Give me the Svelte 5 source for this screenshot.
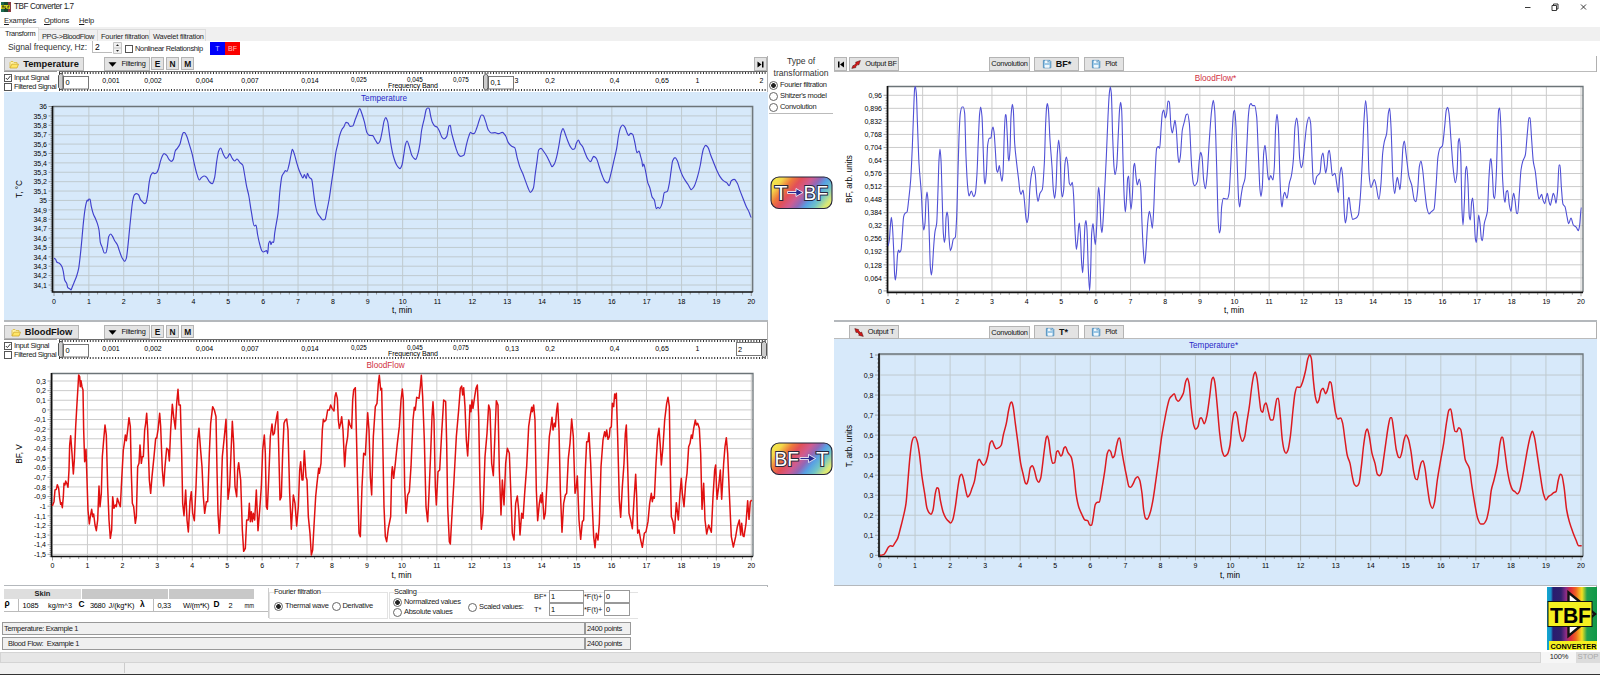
<script lang="ts">
    type Chart = {
        title: string
        titleX: number
        titleY: number
        titleColor: string
        tinted: boolean
        view: [number, number, number, number]
        plot: [number, number, number, number]
        x0: number
        x20: number
        yLabels: string[]
        yFirst: number
        yStep: number
        xLabelY: number
        unitX: number
        unitY: number
        yTitle: string
        yTitleX: number
        yTitleY: number
        stroke: string
        strokeWidth: number
        smooth: boolean
        // every trace: x offset, y offset (in thirds of a pixel) and its points
        traces: [number, number, string][]
    }

    const decimals = (from: number, count: number, step: number, digits: number) =>
        Array.from({ length: count }, (_, i) =>
            String(Number((from - i * step).toFixed(digits))).replace('.', ',')
        )

    const temperature: Chart = {
        title: 'Temperature', titleX: 384, titleY: 100.8, titleColor: '#2a2ac8', tinted: true,
        view: [4, 92, 764, 228], plot: [52.5, 106.5, 752.7, 292], x0: 54, x20: 751.3,
        yLabels: decimals(36, 20, 0.1, 1), yFirst: 106.5, yStep: 9.395,
        xLabelY: 303.5, unitX: 402, unitY: 313.2, yTitle: 'T, °C', yTitleX: 21.5, yTitleY: 189,
        stroke: '#4040cc', strokeWidth: 1.15, smooth: true,
        traces: [
            [0, 270, '162,505 167,508 170,516 178,520 186,530 190,545 194,570 200,580 203,592 210,597 213,600 217,590 222,578 230,558 236,535 241,495 245,455 250,400 255,358 259,338 262,330 264,333 267,327 270,328 274,350 280,372 286,385 292,400 297,420 301,457 307,473 313,489 318,488 322,470 326,440 332,432 338,440 344,452 352,464 358,482 366,503 374,514 379,505 383,475 388,425 393,375 398,333 403,315 410,311 416,315 421,328 427,335 434,341 438,338 443,315 448,275 453,255 459,248 463,251 470,248 476,235 481,215 486,200 492,191 500,196 507,208 514,214 520,208 526,182 532,175 540,162 546,138 550,128 554,128 560,138 567,160 576,190 583,222 590,250 598,270 604,263 613,258 620,262 628,275 637,281 644,262 650,215 656,183 662,174 670,193 678,205 684,200 689,191 696,204 704,213 711,207 720,218 728,225 734,255 740,290 746,315 754,365 763,408 768,405 773,435 779,462 786,483 790,486 800,482 803,491 806,460 810,453 813,464 816,456 821,457 824,430 829,400 834,370 840,300 846,258 852,248 856,242 861,244 867,225 873,195 877,178 883,192 890,218 897,240 905,258 909,264 913,254 919,266 922,250 928,262 935,268 941,310 946,345 952,368 960,380 969,390 975,388 980,365 987,330 995,275 1001,235 1008,185 1014,160 1018,140 1026,118 1032,110 1038,97 1044,99 1050,109 1058,108 1066,88 1073,70 1079,56 1086,72 1093,95 1101,128 1108,136 1118,137 1126,150 1134,161 1140,153 1147,122 1152,94 1157,83 1163,95 1168,130 1174,170 1180,198 1190,225 1200,236'],
            [1170, 270, '36,225 42,190 46,165 51,153 58,170 65,195 72,205 77,208 84,190 90,160 95,120 103,85 109,58 113,54 117,55 122,78 127,97 134,108 142,112 149,125 156,142 162,147 170,140 174,122 177,107 181,106 184,125 192,155 198,175 205,193 212,199 222,195 228,170 235,143 242,127 247,131 253,130 260,115 268,90 274,75 279,76 287,95 295,120 304,129 315,128 326,131 337,127 347,138 355,158 365,169 374,173 382,205 390,232 398,250 406,272 414,293 421,307 430,295 436,250 441,215 446,180 453,175 460,183 470,198 480,218 486,230 493,222 500,200 507,165 513,130 519,116 525,130 533,152 541,170 548,178 554,176 559,160 565,150 570,160 578,170 585,188 593,206 602,215 606,208 611,199 619,205 627,228 636,255 644,273 652,279 656,275 663,250 671,215 680,175 686,135 692,112 698,105 705,112 711,128 716,136 722,130 728,133 735,160 741,188 747,183 752,200 756,215 758,230 761,222 767,245 773,277 780,295 786,320 793,330 799,356 804,352 809,355 817,338 823,308 832,304 838,280 843,245 848,212 855,203 862,212 869,235 878,258 886,272 895,285 904,299 912,290 922,262 931,225 936,195 941,175 947,166 954,172 962,195 970,215 980,240 990,260 1000,272 1010,278 1018,287 1024,272 1033,268 1042,280 1050,302 1060,328 1068,348 1078,368 1084,383']
        ]
    }

    const outputFlow: Chart = {
        title: 'BloodFlow*', titleX: 1215.5, titleY: 80.8, titleColor: '#d03040', tinted: false,
        view: [834, 72, 763, 248], plot: [887.5, 86.5, 1583, 292.3], x0: 888, x20: 1581,
        yLabels: decimals(0.96, 16, 0.064, 3), yFirst: 95.3, yStep: 13.04,
        xLabelY: 303.5, unitX: 1234, unitY: 313.2, yTitle: 'BF, arb. units', yTitleX: 851.5, yTitleY: 179,
        stroke: '#5050d6', strokeWidth: 1.1, smooth: true,
        traces: [
            [2490, 150, '174,588 178,570 181,530 184,502 187,525 191,600 194,675 196,690 199,670 203,610 206,600 209,607 213,600 217,550 221,500 225,490 231,486 236,450 242,390 247,290 251,180 254,115 256,110 259,130 262,210 267,340 274,430 278,510 281,540 285,520 288,450 291,426 294,450 298,560 301,650 304,675 307,655 311,590 315,545 320,520 324,420 327,330 330,297 333,330 337,460 340,550 343,577 346,560 348,505 351,486 354,500 357,560 361,602 365,592 370,567 376,562 380,500 383,400 387,260 391,190 396,171 400,171 404,190 408,320 413,410 417,438 424,423 431,440 436,430 441,370 445,270 449,190 452,171 456,200 460,310 463,390 465,402 469,370 473,285 478,265 483,264 486,240 489,231 492,245 496,300 500,360 503,367 508,347 512,375 516,394 519,370 523,250 526,194 528,195 532,260 535,325 537,333 540,300 543,200 547,163 550,180 554,280 560,340 566,390 570,425 573,433 579,420 583,450 588,505 591,518 595,500 600,410 605,370 611,349 616,375 620,430 624,454 630,430 637,418 643,340 647,220 650,170 652,161 655,175 660,270 666,350 670,420 674,445 678,410 682,310 686,270 690,310 694,420 697,441 701,420 705,340 709,321 713,340 718,400 722,406 727,397 731,440 735,540 739,598 743,570 746,530 748,519 751,550 755,640 758,668 761,620 765,525 768,512 771,540 775,660 779,722 782,660 785,550 789,521 792,550 796,584 800,530 804,430 806,412 809,440 813,530 816,548 820,500 824,420 829,320 834,200 838,130 841,111 844,130 848,260 852,350 855,374 860,350 865,250 869,175 872,157 875,180 879,330 883,450 886,486 890,440 893,385 896,378 899,430 903,478 907,440 911,350 914,340 918,380 922,405 928,387 932,410 936,520 940,600 944,641 948,600 953,520 958,484 962,500 967,535 971,480 975,380 980,295 985,290 989,295 993,240 997,190 1001,180 1006,204 1010,190 1014,153 1018,156 1023,230 1027,249 1031,230 1035,211 1039,240 1044,320 1047,338 1051,320 1057,240 1064,212 1068,195 1073,192 1078,220 1085,350 1090,400 1094,407 1102,395 1108,330 1112,307 1116,320 1121,390 1126,416 1131,380 1138,270 1145,180 1150,151 1154,180 1160,350 1165,520 1168,549'],
            [3600, 150, '61,540 65,470 70,445 82,447 87,430 92,350 97,240 101,185 104,181 108,230 112,350 116,450 119,471 123,440 128,410 135,385 140,300 145,200 149,166 153,161 158,167 164,167 170,200 175,310 180,420 183,439 187,410 191,310 195,286 199,320 204,380 207,390 212,377 219,390 223,350 227,230 231,193 235,230 240,390 244,460 246,471 250,440 254,427 261,445 268,400 274,378 280,330 285,230 290,204 294,230 299,325 304,353 308,340 315,270 321,220 327,201 332,220 336,320 340,395 344,404 350,380 360,368 365,320 369,309 373,340 377,369 381,350 385,307 388,301 393,340 397,377 405,370 410,400 415,428 420,370 424,351 428,380 433,490 436,519 440,500 444,450 447,442 452,480 458,508 467,505 475,495 481,440 487,330 492,210 497,152 502,210 507,370 513,413 518,400 523,389 529,410 534,440 537,448 543,400 548,310 553,275 560,250 565,190 569,175 573,230 579,390 584,431 589,395 592,382 596,400 600,419 605,360 609,290 613,273 618,310 627,380 635,405 643,450 648,455 653,420 658,350 663,333 668,360 674,420 681,475 687,492 694,485 702,478 708,410 714,320 720,295 727,288 734,230 739,180 743,172 747,190 753,270 760,360 766,398 771,370 775,275 778,265 782,310 786,480 789,525 793,460 797,360 800,349 804,400 808,500 811,510 815,455 818,444 822,490 826,565 829,577 833,530 836,495 840,520 844,565 847,572 853,520 862,485 867,380 871,330 873,326 877,370 881,440 884,446 889,370 893,240 896,180 899,174 903,240 908,390 913,450 915,457 919,425 923,422 928,465 933,484 937,450 941,430 945,450 950,490 953,491 958,430 963,360 968,335 976,315 982,250 987,203 990,204 995,270 1000,335 1006,365 1012,420 1017,447 1021,440 1025,433 1029,450 1034,461 1039,440 1042,430 1046,450 1051,466 1055,450 1060,430 1064,440 1068,460 1073,420 1077,345 1080,345 1084,410 1089,463 1095,470 1101,500 1106,521 1113,504 1120,525 1129,532 1135,542 1139,525 1144,472']
        ]
    }

    const bloodFlow: Chart = {
        title: 'BloodFlow', titleX: 385.5, titleY: 368, titleColor: '#d03040', tinted: false,
        view: [4, 359, 764, 226], plot: [51.5, 373.5, 753, 556.5], x0: 52.5, x20: 751.3,
        yLabels: decimals(0.3, 19, 0.1, 1), yFirst: 381, yStep: 9.63,
        xLabelY: 567.8, unitX: 401.5, unitY: 577.8, yTitle: 'BF, V', yTitleX: 21.5, yTitleY: 454,
        stroke: '#e01010', strokeWidth: 1.5, smooth: false,
        traces: [
            [0, 960, '157,558 162,545 165,510 169,508 172,494 176,505 179,535 182,553 184,548 187,563 190,530 192,490 195,495 197,483 201,492 204,502 207,450 209,375 212,347 216,400 220,462 223,420 227,320 231,250 234,200 236,165 239,170 241,200 243,182 246,200 249,210 251,330 254,425 258,388 261,480 264,570 268,612 271,590 275,568 278,590 281,582 285,615 289,632 293,600 297,498 300,560 304,520 307,410 311,360 315,315 319,345 323,500 327,600 331,655 335,630 338,530 342,565 346,555 349,560 352,535 357,550 361,560 365,480 370,390 373,370 376,345 379,362 383,330 387,293 391,320 394,460 397,550 401,560 406,610 409,590 413,440 417,430 420,375 424,430 427,410 430,410 434,330 437,310 440,280 443,330 448,480 452,520 456,470 462,410 467,355 470,355 474,330 479,280 482,320 487,450 491,498 495,440 500,385 505,390 508,423 512,330 517,253 521,290 526,327 530,250 534,208 537,255 541,255 545,400 548,550 552,587 557,510 561,600 565,636 570,545 574,515 578,580 583,602 588,500 593,360 597,325 601,380 606,440 610,530 614,580 619,545 623,545 628,400 632,310 638,260 643,270 648,290 651,450 654,580 658,640 662,560 667,410 672,360 678,298 681,400 684,538 689,500 693,400 697,304 701,370 705,500 710,530 713,450 716,428 722,480 727,630 731,694 736,685 740,600 745,600 748,550 751,605 754,575 757,605 760,580 764,600 769,510 774,632 779,570 784,500 788,390 793,345 796,400 799,560 802,568 806,480 811,350 816,312 819,345 823,340 826,315 830,290 833,275 836,380 840,540 844,530 848,400 852,310 856,300 860,297 864,330 869,520 874,628 880,525 885,550 890,618 895,560 899,450 902,425 906,480 909,480 913,392 918,470 921,480 925,590 930,640 934,705 938,690 943,600 947,530 951,490 956,445 958,460 963,430 967,330 970,298 973,305 978,300 983,270 988,270 992,255 996,265 1002,273 1005,230 1008,218 1012,235 1015,300 1018,325 1022,310 1025,290 1029,330 1034,440 1038,380 1043,350 1046,300 1050,315 1055,325 1058,240 1061,210 1066,203 1069,330 1073,500 1077,640 1081,650 1086,500 1091,400 1096,405 1099,350 1103,278 1107,330 1111,470 1115,525 1120,350 1126,260 1131,250 1135,190 1138,166 1142,210 1145,205 1148,350 1152,560 1156,650 1160,665 1165,625 1170,600'],
            [1170, 960, '2,590 5,460 7,440 11,475 16,430 22,370 28,320 33,240 37,207 40,240 44,500 48,580 53,525 58,515 63,440 69,300 73,262 76,270 80,232 87,235 91,200 94,166 98,230 103,360 108,560 113,605 117,520 122,400 126,290 129,245 132,300 136,500 139,555 144,455 149,450 155,340 161,240 167,245 170,370 173,560 178,665 181,672 185,600 192,480 199,350 206,270 211,205 215,198 218,225 221,203 225,260 229,360 233,408 237,330 240,255 243,275 246,240 249,265 254,230 258,205 262,195 266,290 270,500 274,628 279,580 285,410 291,340 296,255 300,270 305,430 310,467 315,340 319,242 324,255 328,450 333,585 337,480 342,555 347,430 352,385 358,400 363,530 367,640 372,660 377,550 382,528 386,570 390,645 395,580 399,595 404,520 410,440 416,320 421,285 425,262 427,275 431,255 435,300 439,510 443,602 448,550 452,525 454,548 457,518 462,597 466,580 472,470 478,350 481,330 486,292 489,330 493,310 496,320 500,270 503,250 507,330 511,510 516,637 521,550 526,525 530,520 535,415 540,370 545,297 550,350 555,520 559,500 562,468 567,600 572,658 577,605 581,600 586,450 590,365 594,365 597,338 602,430 607,560 611,650 615,683 619,640 624,660 628,610 633,440 639,360 644,335 647,350 650,330 654,358 658,350 660,325 664,320 667,250 671,260 674,222 676,235 679,220 683,350 688,540 692,592 697,500 702,430 706,340 709,315 713,440 717,580 722,600 727,626 732,540 737,463 740,530 743,640 747,630 752,660 757,682 763,640 768,635 774,605 779,550 784,520 787,545 790,530 793,535 798,430 803,350 807,325 811,380 814,435 819,380 824,300 830,250 834,232 838,260 841,450 844,590 849,605 853,640 859,548 865,600 870,520 874,475 877,520 882,560 887,490 891,460 896,380 900,370 904,345 907,355 911,325 916,300 919,315 923,310 928,325 932,400 936,568 941,490 945,600 950,642 956,615 964,637 969,530 974,450 977,435 981,538 986,500 991,450 995,538 1001,430 1005,380 1009,353 1013,400 1018,520 1024,650 1030,681 1037,650 1042,620 1048,600 1052,645 1055,610 1059,648 1062,650 1068,610 1073,542 1077,598 1081,545 1085,540']
        ]
    }

    const outputTemperature: Chart = {
        title: 'Temperature*', titleX: 1213.5, titleY: 348.2, titleColor: '#2a2ac8', tinted: true,
        view: [834, 339, 763, 246], plot: [879, 354, 1583, 556.5], x0: 880, x20: 1581,
        yLabels: decimals(1, 11, 0.1, 1), yFirst: 355, yStep: 20.03,
        xLabelY: 567.8, unitX: 1230, unitY: 577.8, yTitle: 'T, arb. units', yTitleX: 852, yTitleY: 446,
        stroke: '#dc1a20', strokeWidth: 1.5, smooth: true,
        traces: [
            [2490, 960, '150,706 162,703 168,695 175,682 181,677 188,679 194,670 203,655 210,630 220,590 228,550 234,480 240,410 246,365 251,352 256,351 262,365 268,400 276,470 284,520 291,565 297,578 303,583 309,570 316,520 321,503 325,505 331,540 339,575 348,595 357,605 362,609 368,600 376,560 384,500 390,468 395,463 401,480 408,515 413,531 420,522 426,505 433,485 439,450 444,422 448,418 455,430 461,436 467,428 474,405 480,370 486,362 493,378 499,386 507,383 514,375 520,345 529,310 536,270 542,248 545,246 549,258 556,310 564,370 572,430 580,465 586,489 590,492 595,478 601,443 607,437 613,450 620,478 626,487 632,475 637,440 643,390 649,352 652,348 656,360 662,405 668,430 674,428 680,395 684,392 692,408 696,405 702,384 706,380 714,398 724,412 731,450 738,520 746,560 755,582 765,600 773,602 780,616 785,615 790,590 796,553 802,547 808,546 815,510 824,455 832,400 837,390 842,395 848,413 853,408 860,375 866,355 869,354 875,390 882,430 890,470 897,500 902,502 910,490 917,475 923,470 929,480 936,520 941,570 946,594 951,598 960,580 968,545 977,485 986,420 995,350 1003,305 1012,260 1019,235 1026,227 1033,221 1039,238 1045,244 1054,232 1060,220 1067,185 1072,175 1077,190 1084,265 1091,315 1097,328 1104,320 1110,295 1114,293 1123,311 1130,290 1139,230 1146,177 1150,172 1154,185 1161,250 1169,340 1177,395 1184,409 1192,403 1200,375'],
            [3600, 960, '96,315 102,280 107,275 112,290 119,340 127,364 134,350 140,310 148,260 156,195 162,163 166,156 171,175 178,235 183,272 188,277 193,255 198,249 205,275 212,300 219,300 226,260 231,236 235,235 241,290 247,360 253,392 258,400 264,390 271,350 279,270 285,220 291,201 300,202 308,185 316,155 324,115 329,104 334,115 340,180 346,230 352,249 357,240 363,212 369,205 377,221 384,205 389,185 393,188 400,235 407,280 413,297 422,294 428,310 435,360 442,407 450,430 457,470 463,493 470,499 477,490 484,440 491,375 498,333 502,327 508,350 516,400 525,430 532,463 538,467 544,460 551,415 558,365 565,318 571,293 575,293 581,330 589,390 596,412 600,413 606,395 612,360 618,345 625,357 633,395 641,455 647,477 652,479 658,450 664,427 669,422 675,445 682,500 690,550 697,565 703,550 712,480 722,420 731,370 740,305 747,270 752,267 759,305 765,334 770,335 776,323 782,328 789,370 796,420 808,445 816,500 825,555 833,595 842,612 850,612 859,600 867,565 874,510 882,480 892,435 900,370 905,352 908,352 914,390 922,450 930,490 938,510 946,516 952,522 958,515 966,480 975,430 984,380 992,345 997,334 1003,350 1011,400 1020,460 1030,520 1038,540 1045,530 1053,525 1061,518 1068,515 1075,480 1081,463 1085,465 1092,500 1100,570 1108,605 1118,635 1128,660 1136,677 1145,677']
        ]
    }

    // Monotone cubic between the samples, so peaks never overshoot
    const toPath = (chart: Chart) => {
        const pts = chart.traces.flatMap(([dx, dy, list]) =>
            list.split(' ').map((pair) => {
                const [x, y] = pair.split(',').map(Number)
                return [(x + dx) / 3, (y + dy) / 3]
            })
        )
        if (!chart.smooth) return 'M' + pts.map((p) => p.map((n) => n.toFixed(2)).join(',')).join('L')

        const slopes = pts.slice(1).map((p, i) => (p[1] - pts[i][1]) / (p[0] - pts[i][0]))
        const tangents = pts.map((_, i) => {
            const a = slopes[i - 1] ?? 0
            const b = slopes[i] ?? 0
            return a * b <= 0 ? 0 : (2 * a * b) / (a + b)
        })
        let d = `M${pts[0][0]},${pts[0][1]}`
        for (let i = 1; i < pts.length; i++) {
            const [x1, y1] = pts[i - 1]
            const [x2, y2] = pts[i]
            const h = (x2 - x1) / 3
            d += `C${[x1 + h, y1 + tangents[i - 1] * h, x2 - h, y2 - tangents[i] * h, x2, y2].map((n) => n.toFixed(2)).join(',')}`
        }
        return d
    }

    const marks: [string, number][] = [
        ['0,001', 112], ['0,002', 154], ['0,004', 205.5], ['0,007', 251], ['0,014', 311],
        ['0,025', 360], ['0,045', 416], ['0,075', 462], ['0,13', 513], ['0,2', 551],
        ['0,4', 615.5], ['0,65', 663], ['1', 698.5], ['2', 762.5]
    ]

    let signalFrequency = $state('2')
    let nonlinear = $state(false)
    let transformation = $state('Fourier filtration')
    let filtration = $state('Thermal wave')
    let scaling = $state('Normalized values')
</script>

{#snippet graph(chart: Chart)}
    {@const [left, top, right, bottom] = chart.plot}
    {@const step = (chart.x20 - chart.x0) / 20}
    <svg
        class="graph"
        class:tinted={chart.tinted}
        width={chart.view[2]}
        height={chart.view[3]}
        viewBox={chart.view.join(' ')}
    >
        <text class="graph-title" x={chart.titleX} y={chart.titleY} fill={chart.titleColor}>{chart.title}</text>
        {#each chart.yLabels as label, i}
            {@const y = chart.yFirst + i * chart.yStep}
            <line class="grid-line" x1={left} x2={right} y1={y} y2={y} />
            <line class="tick" x1={left - 4} x2={left} y1={y} y2={y} />
            {#each [0.2, 0.4, 0.6, 0.8] as part}
                {#if y + part * chart.yStep < bottom}
                    <line class="tick" x1={left - 2} x2={left} y1={y + part * chart.yStep} y2={y + part * chart.yStep} />
                {/if}
            {/each}
            <text class="y-label" x={left - 5.5} y={y + 2.7}>{label}</text>
        {/each}
        {#each { length: 21 } as _, i}
            {@const x = chart.x0 + i * step}
            <line class="grid-line" x1={x} x2={x} y1={top} y2={bottom} />
            <line class="tick" x1={x} x2={x} y1={bottom} y2={bottom + 4} />
            {#if i < 20}
                {#each [0.25, 0.5, 0.75] as part}
                    <line class="tick" x1={x + part * step} x2={x + part * step} y1={bottom} y2={bottom + 2.5} />
                {/each}
            {/if}
            <text class="x-label" {x} y={chart.xLabelY}>{i}</text>
        {/each}
        <path class="frame" d="M{left},{top}H{right}V{bottom}" />
        <path class="axis" d="M{left},{top - 0.5}V{bottom}H{right}" />
        <path d={toPath(chart)} fill="none" stroke={chart.stroke} stroke-width={chart.strokeWidth} stroke-linejoin="round" />
        <text class="unit" x={chart.unitX} y={chart.unitY}>t, min</text>
        <text class="unit" transform="translate({chart.yTitleX} {chart.yTitleY}) rotate(-90)">{chart.yTitle}</text>
    </svg>
{/snippet}

{#snippet band(top: boolean)}
    <div class="band">
        <div class="signals">
            <span class="option"><i class="box"><svg width="6" height="6" viewBox="0 0 6 6"><path d="M.8,3L2.4,4.6L5.4,1" fill="none" stroke="#333" /></svg></i>Input Signal</span>
            <span class="option"><i class="box"></i>Filtered Signal</span>
        </div>
        <svg class="ruler" width="710" height="20" viewBox="58 71 710 20">
            <path class="ruler-edge" d="M60,71.5H768" />
            <path class="ruler-dots" d="M60,73H768M60,90H768" />
            {#each marks as [label, x]}
                {#if top && label === '0,13'}
                    <text class="mark" x="517.5" y="82.5">3</text>
                {:else if top || label !== '2'}
                    <text class="mark" class:small={x > 355 && x < 470} {x} y={x > 355 && x < 470 ? 81.5 : 82.5}>{label}</text>
                {/if}
            {/each}
            <text class="mark" x="414" y="88.2" textLength="50">Frequency Band</text>
            <rect class="field" x="64.5" y="76.5" width="25" height="12.5" />
            <text class="value" x="66.5" y="85">0</text>
            <path class="thumb" d="M59.5,75.5L62,73L64,75.5V87.5L62,90L59.5,87.5Z" />
            {#if top}
                <rect class="field" x="489.5" y="76.5" width="25" height="12.5" />
                <text class="value" x="491.5" y="85">0,1</text>
                <path class="thumb" d="M484.5,76L487,73.5L489,76V88L487,90.5L484.5,88Z" />
            {:else}
                <rect class="field" x="737.5" y="74.5" width="25" height="13" />
                <text class="value" x="739" y="83.5">2</text>
                <path class="thumb" d="M762.5,75.5L765.2,73L767.5,75.5V87.5L765.2,90L762.5,87.5Z" />
            {/if}
        </svg>
    </div>
{/snippet}

{#snippet folder()}
    <svg width="10" height="9" viewBox="0 0 10 9">
        <path d="M1,8V2.5L2,1.5H4L5,2.5H8V4" fill="#fff3a8" stroke="#d9b93c" stroke-width=".8" />
        <path d="M1,8L2.8,4.2H9.5L8,8Z" fill="#ffe566" stroke="#d0ab2c" stroke-width=".8" />
    </svg>
{/snippet}

{#snippet disk()}
    <svg width="10" height="10" viewBox="0 0 10 10">
        <path d="M1.4,1.4H7.8L8.8,2.4V8.8H1.4Z" fill="#9cc8e6" stroke="#4a8cbc" stroke-width=".9" />
        <path d="M3,1.4H7V4H3ZM2.8,6H7.4V8.8H2.8Z" fill="#f0f8fd" />
        <path d="M5.6,1.6H6.6V3.6H5.6Z" fill="#3f7dac" />
    </svg>
{/snippet}

{#snippet filterButtons()}
    <button class="filtering"><svg width="9" height="5" viewBox="0 0 9 5"><path d="M.5,.3H8.5L4.5,4.7Z" /></svg>Filtering</button>
    {#each ['E', 'N', 'M'] as letter}
        <button class="letter">{letter}</button>
    {/each}
{/snippet}

{#snippet convert(from: string, to: string, id: string)}
    <svg class="convert" width="63" height="34" viewBox="0 0 63 34">
        <defs>
            <linearGradient {id} gradientUnits="userSpaceOnUse" x1="6" y1="-4" x2="57" y2="38">
                <stop offset="0" stop-color="#f4f04e" />
                <stop offset=".14" stop-color="#f4d84a" />
                <stop offset=".26" stop-color="#ee7a3c" />
                <stop offset=".36" stop-color="#e25058" />
                <stop offset=".48" stop-color="#d05c90" />
                <stop offset=".58" stop-color="#9068b8" />
                <stop offset=".67" stop-color="#58a0e4" />
                <stop offset=".78" stop-color="#70c4c8" />
                <stop offset=".9" stop-color="#d8e878" />
                <stop offset="1" stop-color="#f0e860" />
            </linearGradient>
        </defs>
        <rect x="1" y="1" width="61" height="31.5" rx="8" fill="url(#{id})" stroke="#25253a" stroke-width="1.1" />
        <text class="convert-text" x="4.5" y="23.5" textLength={from.length > 1 ? 24.5 : 13} lengthAdjust="spacingAndGlyphs">{from}</text>
        <text class="convert-text" x={to.length > 1 ? 33.5 : 46} y="23.5" textLength={to.length > 1 ? 24.5 : 12.5} lengthAdjust="spacingAndGlyphs">{to}</text>
        <path
            transform="translate({from.length > 1 ? 30 : 17.5} 16.5)"
            d="M0,-1H8.5V-4L15.5,0L8.5,4V1H0Z"
            fill="#2a2a90" stroke="#fff" stroke-width=".8"
        />
    </svg>
{/snippet}

{#snippet radios(names: string[], selected: string, pick: (name: string) => void)}
    {#each names as name}
        <label class="option"><input type="radio" checked={name === selected} onchange={() => pick(name)} />{name}</label>
    {/each}
{/snippet}

<div class="window">
    <header class="titlebar">
        <svg width="10" height="10" viewBox="0 0 10 10">
            <rect width="10" height="10" fill="#184a30" />
            <path d="M0,0H3V10H0Z" fill="#1c6a50" />
            <path d="M7,0H10V10H7Z" fill="#8a3a40" />
            <path d="M0,3H9V7H0Z" fill="#d8d820" />
            <path d="M1,4H3M2,4V6.5M4,4V6.5H5.5M7,6.5V4H8.5" fill="none" stroke="#111" stroke-width=".8" />
        </svg>
        <span class="app-name">TBF Converter 1.7</span>
        <svg class="controls" width="64" height="10" viewBox="0 0 64 10">
            <path d="M2,5.5H7.5M29,3.5H33.5V8.5H29ZM30.5,3.5V2H35V7H33.5M58,2.5L63,7.5M63,2.5L58,7.5" />
        </svg>
    </header>

    <nav class="menu">
        <span class="m1"><u>E</u>xamples</span>
        <span class="m2"><u>O</u>ptions</span>
        <span><u>H</u>elp</span>
    </nav>

    <div class="tabs">
        <span class="tab active">Transform</span>
        <span class="tab ppg">PPG-&gt;BloodFlow</span>
        <span class="tab fourier">Fourier filtration</span>
        <span class="tab wavelet">Wavelet filtration</span>
    </div>

    <div class="signal-row">
        <span class="frequency">Signal frequency, Hz:</span>
        <input class="frequency-value" bind:value={signalFrequency} />
        <svg class="spinner" width="9" height="12" viewBox="0 0 9 12">
            <path d="M.5,.5H8.5V11.5H.5ZM.5,6H8.5" fill="#f0f0f0" stroke="#c4c4c4" />
            <path d="M3,4L4.5,2.3L6,4ZM3,8L4.5,9.7L6,8Z" fill="#222" />
        </svg>
        <label class="option nonlinear"><input type="checkbox" bind:checked={nonlinear} />Nonlinear Relationship</label>
        <span class="chip blue">T</span>
        <span class="chip red">BF</span>
    </div>

    <main>
        <div class="column">
            <section class="panel">
                <div class="toolbar">
                    <button class="source">{@render folder()}Temperature</button>
                    {@render filterButtons()}
                    <button class="skip end">
                        <svg width="8" height="7" viewBox="0 0 8 7"><path d="M.5,.5L4.5,3.5L.5,6.5ZM5,.5H6.5V6.5H5Z" /></svg>
                    </button>
                </div>
                {@render band(true)}
                {@render graph(temperature)}
            </section>
            <section class="panel lower">
                <div class="toolbar">
                    <button class="source narrow">{@render folder()}BloodFlow</button>
                    {@render filterButtons()}
                </div>
                {@render band(false)}
                {@render graph(bloodFlow)}
            </section>
        </div>

        <aside>
            <div class="transformation">
                <h2>Type of transformation</h2>
                {@render radios(['Fourier filtration', "Shitzer's model", 'Convolution'], transformation, (name) => (transformation = name))}
            </div>
            {@render convert('T', 'BF', 'rainbow-flow')}
            {@render convert('BF', 'T', 'rainbow-temperature')}
        </aside>

        <div class="column">
            <section class="panel">
                <div class="toolbar output">
                    <button class="skip">
                        <svg width="8" height="7" viewBox="0 0 8 7"><path d="M1,.5H2.5V6.5H1ZM7,.5L3,3.5L7,6.5Z" /></svg>
                    </button>
                    <button class="out">
                        <svg width="10" height="9" viewBox="0 0 10 9"><path d="M.8,8.4L2,5.4L3,5.6L5,3.2L4.6,2.2L9.4,.5L7.8,5L6.8,4.6L4.8,6.6L4.8,7.6Z" fill="#d01818" stroke="#4a1010" stroke-width=".5" /></svg>Output BF
                    </button>
                    <button class="convolution">Convolution</button>
                    <button class="save">{@render disk()}<b>BF*</b></button>
                    <button class="plot">{@render disk()}Plot</button>
                </div>
                {@render graph(outputFlow)}
            </section>
            <section class="panel lower">
                <div class="toolbar output">
                    <button class="out alone">
                        <svg width="10" height="9" viewBox="0 0 10 9"><path d="M.8,.6L4.6,1.6L4.6,2.8L6.6,4.6L7.6,4L9.3,8.4L4.6,7.2L5.2,6.2L3.2,4.2L2,4.6Z" fill="#d01818" stroke="#4a1010" stroke-width=".5" /></svg>Output T
                    </button>
                    <button class="convolution short">Convolution</button>
                    <button class="save">{@render disk()}<b>T*</b></button>
                    <button class="plot">{@render disk()}Plot</button>
                </div>
                {@render graph(outputTemperature)}
            </section>
        </div>
    </main>

    <footer>
        <div class="settings">
            <div class="tissue">
                <div class="tissue-head"><b>Skin</b><span></span><span></span></div>
                <svg width="264" height="13" viewBox="4 598 264 13">
                    <path d="M18.5,598V611M153.5,598V611M4,610.5H268" stroke="#bbb" />
                    <g class="symbol">
                        <text x="4.5" y="605">ρ</text>
                        <text x="78.5" y="605.5">C</text>
                        <text x="140" y="605.5">λ</text>
                        <text x="213.5" y="605.5">D</text>
                    </g>
                    <g class="value">
                        <text x="22.5" y="606.5" textLength="16">1085</text>
                        <text x="48" y="606.5" textLength="24">kg/m^3</text>
                        <text x="90" y="606.5" textLength="15.5">3680</text>
                        <text x="108.5" y="606.5" textLength="26">J/(kg*K)</text>
                        <text x="157.5" y="606.5" textLength="13.5">0,33</text>
                        <text x="183" y="606.5" textLength="26.5">W/(m*K)</text>
                        <text x="228.5" y="606.5">2</text>
                        <text x="244.5" y="606.5" textLength="9.5" lengthAdjust="spacingAndGlyphs">mm</text>
                    </g>
                </svg>
            </div>
            <fieldset class="filtration">
                <legend>Fourier filtration</legend>
                {@render radios(['Thermal wave', 'Derivative'], filtration, (name) => (filtration = name))}
            </fieldset>
            <fieldset class="scaling">
                <legend>Scaling</legend>
                <div class="stack">
                    {@render radios(['Normalized values', 'Absolute values'], scaling, (name) => (scaling = name))}
                </div>
                <div class="scaled">
                    {@render radios(['Scaled values:'], scaling, (name) => (scaling = name))}
                </div>
                <div class="formulas">
                    {#each ['BF*', 'T*'] as name}
                        <div class="formula">
                            <span class="formula-name">{name}</span><input class="wide" value="1" /><span class="formula-op">*F(t)+</span><input value="0" />
                        </div>
                    {/each}
                </div>
            </fieldset>
        </div>
        <div class="source-info"><span>Temperature: Example 1</span><span>2400 points</span></div>
        <div class="source-info second"><span>Blood Flow:&nbsp; Example 1</span><span>2400 points</span></div>
        <svg class="logo" width="50" height="63" viewBox="0 0 50 63">
            <defs>
                <linearGradient id="spectrum">
                    <stop offset="0" stop-color="#10a8d0" />
                    <stop offset=".08" stop-color="#1a90c8" />
                    <stop offset=".12" stop-color="#281c70" />
                    <stop offset=".28" stop-color="#30206c" />
                    <stop offset=".38" stop-color="#8a2c88" />
                    <stop offset=".48" stop-color="#e03038" />
                    <stop offset=".58" stop-color="#f06820" />
                    <stop offset=".7" stop-color="#f4e020" />
                    <stop offset=".8" stop-color="#20a050" />
                    <stop offset="1" stop-color="#109848" />
                </linearGradient>
            </defs>
            <rect width="50" height="63" fill="url(#spectrum)" />
            <path d="M21.5,5.5L48,27L21.5,49Z" fill="#fff" stroke="#111" stroke-width="2.4" />
            <rect x="1" y="14.5" width="44" height="25" fill="#f4f020" stroke="#111" />
            <text class="logo-name" x="3" y="35.5" textLength="41" lengthAdjust="spacingAndGlyphs">TBF</text>
            <rect x="2" y="54" width="48" height="9" fill="#f4f020" />
            <text class="logo-caption" x="3.5" y="61.5" textLength="46" lengthAdjust="spacingAndGlyphs">CONVERTER</text>
        </svg>
    </footer>

    <div class="progress"><span class="bar"></span><span class="percent">100%</span><span class="stop">STOP</span></div>
    <div class="statusbar"><span></span></div>
</div>

<style>
    :global(body) {
        background: #fff;
    }

    .window {
        display: flex;
        flex-direction: column;
        width: 1600px;
        height: 675px;
        box-sizing: border-box;
        overflow: hidden;
        font: 7.5px/10px 'Liberation Sans', Arial, sans-serif;
        color: #1c1c1c;
        white-space: nowrap;
    }

    svg {
        display: block;
        flex: none;
    }

    .titlebar {
        display: flex;
        align-items: center;
        height: 14px;
        padding-left: 1px;
        gap: 3px;
    }

    .app-name {
        font-size: 8.2px;
        letter-spacing: -0.45px;
    }

    .controls {
        margin-left: auto;
        margin-right: 13px;
        fill: none;
        stroke: #222;
        stroke-width: 0.9;
    }

    .menu {
        display: flex;
        align-items: center;
        height: 13px;
        padding-left: 4px;
        letter-spacing: -0.1px;
    }

    .m1 {
        width: 40px;
    }

    .m2 {
        width: 35px;
    }

    .tabs {
        display: flex;
        align-items: flex-end;
        height: 14px;
        background: #f0f0f0;
        font-size: 7.4px;
        letter-spacing: -0.35px;
    }

    .tab {
        box-sizing: border-box;
        height: 12px;
        padding-left: 3px;
        line-height: 13px;
        border: 1px solid #dcdcdc;
        border-width: 1px 1px 0 0;
    }

    .tab.active {
        width: 39px;
        height: 14px;
        padding-left: 5px;
        background: #fff;
        line-height: 12px;
    }

    .ppg {
        width: 59px;
    }

    .fourier {
        width: 52px;
        letter-spacing: -0.2px;
    }

    .wavelet {
        width: 56px;
        letter-spacing: -0.2px;
    }

    .signal-row {
        display: flex;
        align-items: flex-start;
        height: 15px;
    }

    .frequency {
        width: 84px;
        padding-left: 8px;
        color: #333;
        font-size: 8.5px;
        letter-spacing: -0.05px;
        line-height: 12px;
    }

    .frequency-value {
        width: 20px;
        height: 12px;
        box-sizing: border-box;
        padding: 0 0 0 2px;
        border: solid #bbb;
        border-width: 0 0 1px 1px;
        font: 8.5px/11px 'Liberation Sans', Arial, sans-serif;
    }

    .spinner {
        margin: 1px 0 0 1px;
    }

    .option.nonlinear {
        width: 85px;
        margin: 3px 0 0 3px;
        letter-spacing: -0.35px;
    }

    .chip {
        width: 15px;
        height: 13px;
        margin-top: 1px;
        font-size: 7px;
        line-height: 14px;
        text-align: center;
    }

    .blue {
        background: #0000fa;
        color: #bcbcff;
    }

    .red {
        background: #fa0000;
        color: #ffc0c0;
    }

    .option {
        display: flex;
        align-items: center;
        height: 10px;
        gap: 2px;
        letter-spacing: -0.3px;
    }

    input[type='checkbox'],
    input[type='radio'],
    .box {
        appearance: none;
        box-sizing: border-box;
        flex: none;
        width: 8px;
        height: 8px;
        margin: 0;
        border: 1px solid #555;
        background: #fff;
    }

    input[type='radio'] {
        width: 9px;
        height: 9px;
        border-color: #666;
        border-radius: 50%;
    }

    input[type='radio']:checked {
        background: radial-gradient(circle, #222 0 2px, #fff 2.7px);
    }

    main {
        display: grid;
        grid-template-columns: 764px 66px 763px;
        height: 530px;
        padding-left: 4px;
    }

    .panel {
        height: 265px;
    }

    .lower {
        height: 264px;
        padding-top: 2px;
    }

    .column {
        border-right: 1px solid #b0b0b0;
    }

    .toolbar {
        display: flex;
        align-items: flex-start;
        height: 15px;
        box-sizing: border-box;
        padding-top: 1px;
    }

    .lower .toolbar {
        height: 16px;
        padding-top: 2px;
    }

    .toolbar.output {
        height: 16px;
        border-bottom: 1px solid #bbb;
    }

    button {
        display: flex;
        align-items: center;
        justify-content: center;
        box-sizing: border-box;
        height: 14px;
        gap: 4px;
        padding: 0;
        border: 1px solid #b4b4b4;
        background: #e3e3e3;
        color: #111;
        font: 7.4px/10px 'Liberation Sans', Arial, sans-serif;
        letter-spacing: -0.25px;
    }

    .source {
        width: 80px;
        margin-right: 20px;
        font-size: 9.3px;
        font-weight: bold;
        letter-spacing: 0;
    }

    .source.narrow {
        width: 75px;
        margin-right: 25px;
    }

    .filtering {
        width: 46px;
        margin-right: 1px;
    }

    .letter {
        width: 13px;
        height: 13px;
        margin-right: 2px;
        font-size: 8.4px;
        font-weight: bold;
    }

    .skip {
        width: 13px;
        margin-right: 2px;
    }

    .skip.end {
        margin: 0 0 0 auto;
    }

    .out {
        width: 50px;
        margin-right: 90px;
    }

    .out.alone {
        margin-left: 15px;
    }

    .convolution {
        width: 41px;
        margin-right: 4px;
    }

    .convolution.short {
        height: 13px;
        margin-top: 1px;
    }

    .save {
        width: 45px;
        margin-right: 5px;
    }

    .save b {
        font-size: 9px;
        letter-spacing: 0;
    }

    .plot {
        width: 40px;
    }

    .band {
        display: flex;
        height: 21px;
    }

    .lower .band {
        height: 20px;
    }

    .signals {
        width: 54px;
        padding-top: 1px;
        border-top: 1px solid #999;
        box-sizing: border-box;
    }

    .signals .option {
        height: 9.5px;
        letter-spacing: -0.38px;
    }

    .ruler-edge {
        stroke: #444;
        stroke-width: 0.8;
    }

    .ruler-dots {
        stroke: #333;
        stroke-width: 2;
        stroke-dasharray: 1 1.8;
    }

    .mark {
        font-size: 7px;
        text-anchor: middle;
    }

    .mark.small {
        font-size: 6.3px;
    }

    .value {
        font-size: 7.4px;
    }

    .field {
        fill: #fff;
        stroke: #777;
    }

    .thumb {
        fill: #ccc;
        stroke: #555;
    }

    .graph {
        background: #fff;
        border-bottom: 2px solid #b4b8bc;
        font-size: 7px;
    }

    .lower .graph {
        border-bottom-width: 1px;
    }

    .graph.tinted {
        background: #d7e9fa;
    }

    .graph-title {
        font-size: 8.2px;
        text-anchor: middle;
    }

    .grid-line {
        stroke: #cbcbcb;
    }

    .tinted .grid-line {
        stroke: #bfcacf;
    }

    .tick {
        stroke: #888;
        stroke-width: 0.8;
    }

    .frame {
        fill: none;
        stroke: #6c7478;
        stroke-width: 1.3;
    }

    .axis {
        fill: none;
        stroke: #111;
        stroke-width: 1.7;
    }

    .x-label {
        text-anchor: middle;
    }

    .y-label {
        text-anchor: end;
    }

    .unit {
        font-size: 8.2px;
        text-anchor: middle;
    }

    aside {
        display: flex;
        flex-direction: column;
        padding-left: 1px;
    }

    .transformation {
        width: 64px;
        height: 57px;
        border-bottom: 1px solid #bbb;
    }

    .transformation .option {
        height: 11.2px;
    }

    h2 {
        height: 23.5px;
        margin: 0;
        color: #333;
        font-size: 8.6px;
        font-weight: normal;
        line-height: 11.5px;
        text-align: center;
        white-space: normal;
    }

    .convert {
        margin: 62px 0 0 1px;
    }

    .convert + .convert {
        margin-top: 232px;
    }

    .convert-text {
        font: 19.5px 'Liberation Sans', Arial, sans-serif;
        fill: #fff;
        stroke: #26263c;
        stroke-width: 2px;
        paint-order: stroke;
    }

    footer {
        display: grid;
        grid-template-columns: 1547px 50px;
        grid-template-rows: 35px 15px 16px;
        height: 66px;
    }

    .settings {
        grid-row: 1;
        display: flex;
        width: 640px;
        height: 35px;
        box-sizing: border-box;
        padding: 2px 0 0 4px;
    }

    .tissue {
        width: 264px;
        height: 30px;
        border-right: 1px solid #ccc;
    }

    .tissue-head {
        display: grid;
        grid-template-columns: 77px 86px 85px;
        gap: 1px;
        height: 10px;
        margin-top: 1px;
        text-align: center;
    }

    .tissue-head b {
        background: #dedede;
    }

    .tissue-head span {
        background: #c8c8c8;
    }

    .symbol {
        font: bold 8.4px 'Liberation Sans', Arial, sans-serif;
    }

    fieldset {
        position: relative;
        display: flex;
        box-sizing: border-box;
        height: 27px;
        margin: 4px 0 0;
        padding: 0;
        border: 1px solid #e2e2e2;
    }

    legend {
        position: absolute;
        top: -6px;
        left: 4px;
        padding: 0;
        background: #fff;
        letter-spacing: -0.3px;
    }

    .filtration {
        width: 119px;
        padding: 8px 0 0 4px;
        gap: 3px;
    }

    .scaling {
        width: 249px;
        margin-left: 1px;
        padding-left: 3px;
        border-right: 0;
    }

    .stack {
        width: 75px;
        padding-top: 4px;
    }

    .scaled {
        width: 66px;
        padding-top: 9px;
    }

    .formulas {
        margin-top: -3px;
    }

    .formula {
        display: flex;
        align-items: center;
        height: 13px;
    }

    .formula-name {
        width: 15px;
    }

    .formula-op {
        width: 20px;
        letter-spacing: -0.1px;
    }

    .formula input {
        box-sizing: border-box;
        width: 26px;
        height: 13px;
        padding: 0 0 0 1px;
        border: 1px solid #999;
        font: 7.4px 'Liberation Sans', Arial, sans-serif;
    }

    .formula .wide {
        width: 35px;
    }

    .source-info {
        display: grid;
        grid-template-columns: 583px 46px;
        width: 629px;
        height: 13px;
        margin: 1px 0 0 2px;
        line-height: 11px;
        letter-spacing: -0.35px;
    }

    .source-info span {
        box-sizing: border-box;
        padding-left: 1px;
        border: 1px solid #999;
        background: #f0f0f0;
    }

    .source-info.second span:first-child {
        padding-left: 5px;
    }

    .logo {
        grid-column: 2;
        grid-row: 1 / 4;
        margin-top: 1px;
    }

    .logo-name {
        font: bold 22px 'Liberation Sans', Arial, sans-serif;
    }

    .logo-caption {
        font: bold 7.5px 'Liberation Sans', Arial, sans-serif;
    }

    .progress {
        display: flex;
        height: 11px;
    }

    .bar {
        width: 1541px;
        background: #e6e6e6;
        border: 1px solid #d4d4d4;
        box-sizing: border-box;
    }

    .percent {
        width: 34px;
        padding-left: 1px;
        background: #f6f6f6;
        letter-spacing: -0.2px;
        text-align: center;
    }

    .stop {
        width: 24px;
        background: #dcdcdc;
        color: #a8a8a8;
        font-size: 7.8px;
        text-align: center;
    }

    .statusbar {
        flex: 1;
        background: #f0f0f0;
        border-bottom: 1px solid #333;
    }

    .statusbar span {
        display: block;
        width: 124px;
        height: 10px;
        border-right: 1px solid #ccc;
    }
</style>
